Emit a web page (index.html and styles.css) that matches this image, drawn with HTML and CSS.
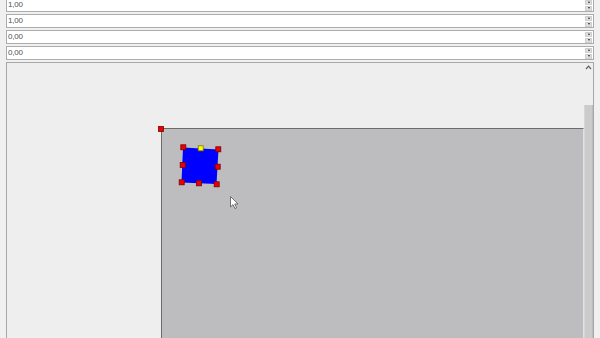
FILE: index.html
```html
<!DOCTYPE html>
<html>
<head>
<meta charset="utf-8">
<link rel="stylesheet" href="styles.css">
</head>
<body>
<div class="page">
  <div class="fields">
    <div class="spin"><span class="val">1,00</span><div class="btns"><div class="b up"></div><div class="b down"></div></div></div>
    <div class="spin"><span class="val">1,00</span><div class="btns"><div class="b up"></div><div class="b down"></div></div></div>
    <div class="spin"><span class="val">0,00</span><div class="btns"><div class="b up"></div><div class="b down"></div></div></div>
    <div class="spin"><span class="val">0,00</span><div class="btns"><div class="b up"></div><div class="b down"></div></div></div>
  </div>
  <div class="panel">
    <div class="view">
      <div class="canvas">
        <svg class="overlay" width="100" height="90" viewBox="161 128 100 90">
          <polygon points="183,147.5 218.5,149.5 216.5,184 181.5,182.5" fill="#0000ff"/>
          <g fill="#ee0000" stroke="#7a0000" stroke-width="0.8">
            <rect x="158.5" y="126.5" width="5" height="5"/>
            <rect x="180.8" y="144.8" width="5" height="5"/>
            <rect x="215.8" y="146.8" width="5" height="5"/>
            <rect x="180.2" y="162.5" width="5" height="5"/>
            <rect x="215.2" y="164.2" width="5" height="5"/>
            <rect x="179.2" y="179.8" width="5" height="5"/>
            <rect x="196.5" y="180.8" width="5" height="5"/>
            <rect x="214.2" y="181.8" width="5" height="5"/>
          </g>
          <rect x="198.2" y="145.8" width="5" height="5" fill="#ffff00" stroke="#7a7a00" stroke-width="0.8"/>
          <path d="M230.5 196.5 L230.5 207 L233 204.6 L235 208.6 L236.6 207.9 L234.7 204 L238 204 Z" fill="#ffffff" stroke="#555555" stroke-width="0.8" stroke-linejoin="round"/>
        </svg>
      </div>
    </div>
    <div class="sb">
      <div class="arrow"><svg width="7" height="5" viewBox="0 0 7 5"><polyline points="1,4 3.5,1.2 6,4" fill="none" stroke="#606060" stroke-width="1.2"/></svg></div>
      <div class="track"></div>
      <div class="thumb"></div>
    </div>
  </div>
</div>
</body>
</html>
```

FILE: styles.css
```css
html, body {
  margin: 0;
  padding: 0;
}
body {
  width: 600px;
  height: 338px;
  overflow: hidden;
  background: #f0f0f0;
  font-family: "Liberation Sans", Arial, sans-serif;
}
.page {
  display: flex;
  flex-direction: column;
  height: 350px;
  margin-top: -2px;
  padding: 0 6px;
}
.fields {
  display: flex;
  flex-direction: column;
  gap: 2px;
}
.spin {
  height: 14px;
  box-sizing: border-box;
  border: 1px solid #acacac;
  background: #ffffff;
  display: flex;
  align-items: center;
}
.val {
  flex: 1;
  padding-left: 1px;
  font-size: 8px;
  line-height: 12px;
  color: #505050;
  letter-spacing: -0.2px;
}
.btns {
  width: 7px;
  height: 11px;
  margin-right: 1px;
  display: flex;
  flex-direction: column;
  gap: 1px;
}
.b {
  flex: 1;
  background: #dedede;
  border: 1px solid #cfcfcf;
  box-sizing: border-box;
  display: flex;
  align-items: center;
  justify-content: center;
}
.b::after {
  content: "";
  width: 0;
  height: 0;
  border-left: 1.5px solid transparent;
  border-right: 1.5px solid transparent;
}
.up::after {
  border-bottom: 2px solid #333333;
}
.down::after {
  border-top: 2px solid #333333;
}
.panel {
  flex: 1;
  margin-top: 2px;
  border: 1px solid #a8a8a8;
  background: #efeeef;
  display: flex;
  min-height: 0;
}
.view {
  flex: 1;
  padding: 65px 0 0 154px;
  overflow: hidden;
}
.canvas {
  position: relative;
  height: 300px;
  background: #bdbcbe;
  border-top: 1px solid #6c6c6c;
  border-left: 1px solid #6c6c6c;
  border-right: 1px solid #e2e2e2;
}
.overlay {
  position: absolute;
  left: -1px;
  top: -1px;
  overflow: visible;
}
.sb {
  width: 9px;
  display: flex;
  flex-direction: column;
  background: #efeeef;
}
.arrow {
  height: 9px;
  display: flex;
  align-items: center;
  justify-content: center;
}
.track {
  height: 33px;
}
.thumb {
  flex: 1;
  background: #cbcbcb;
  border-left: 1px solid #d6d6d6;
  border-right: 1px solid #bcbcbc;
}
```
